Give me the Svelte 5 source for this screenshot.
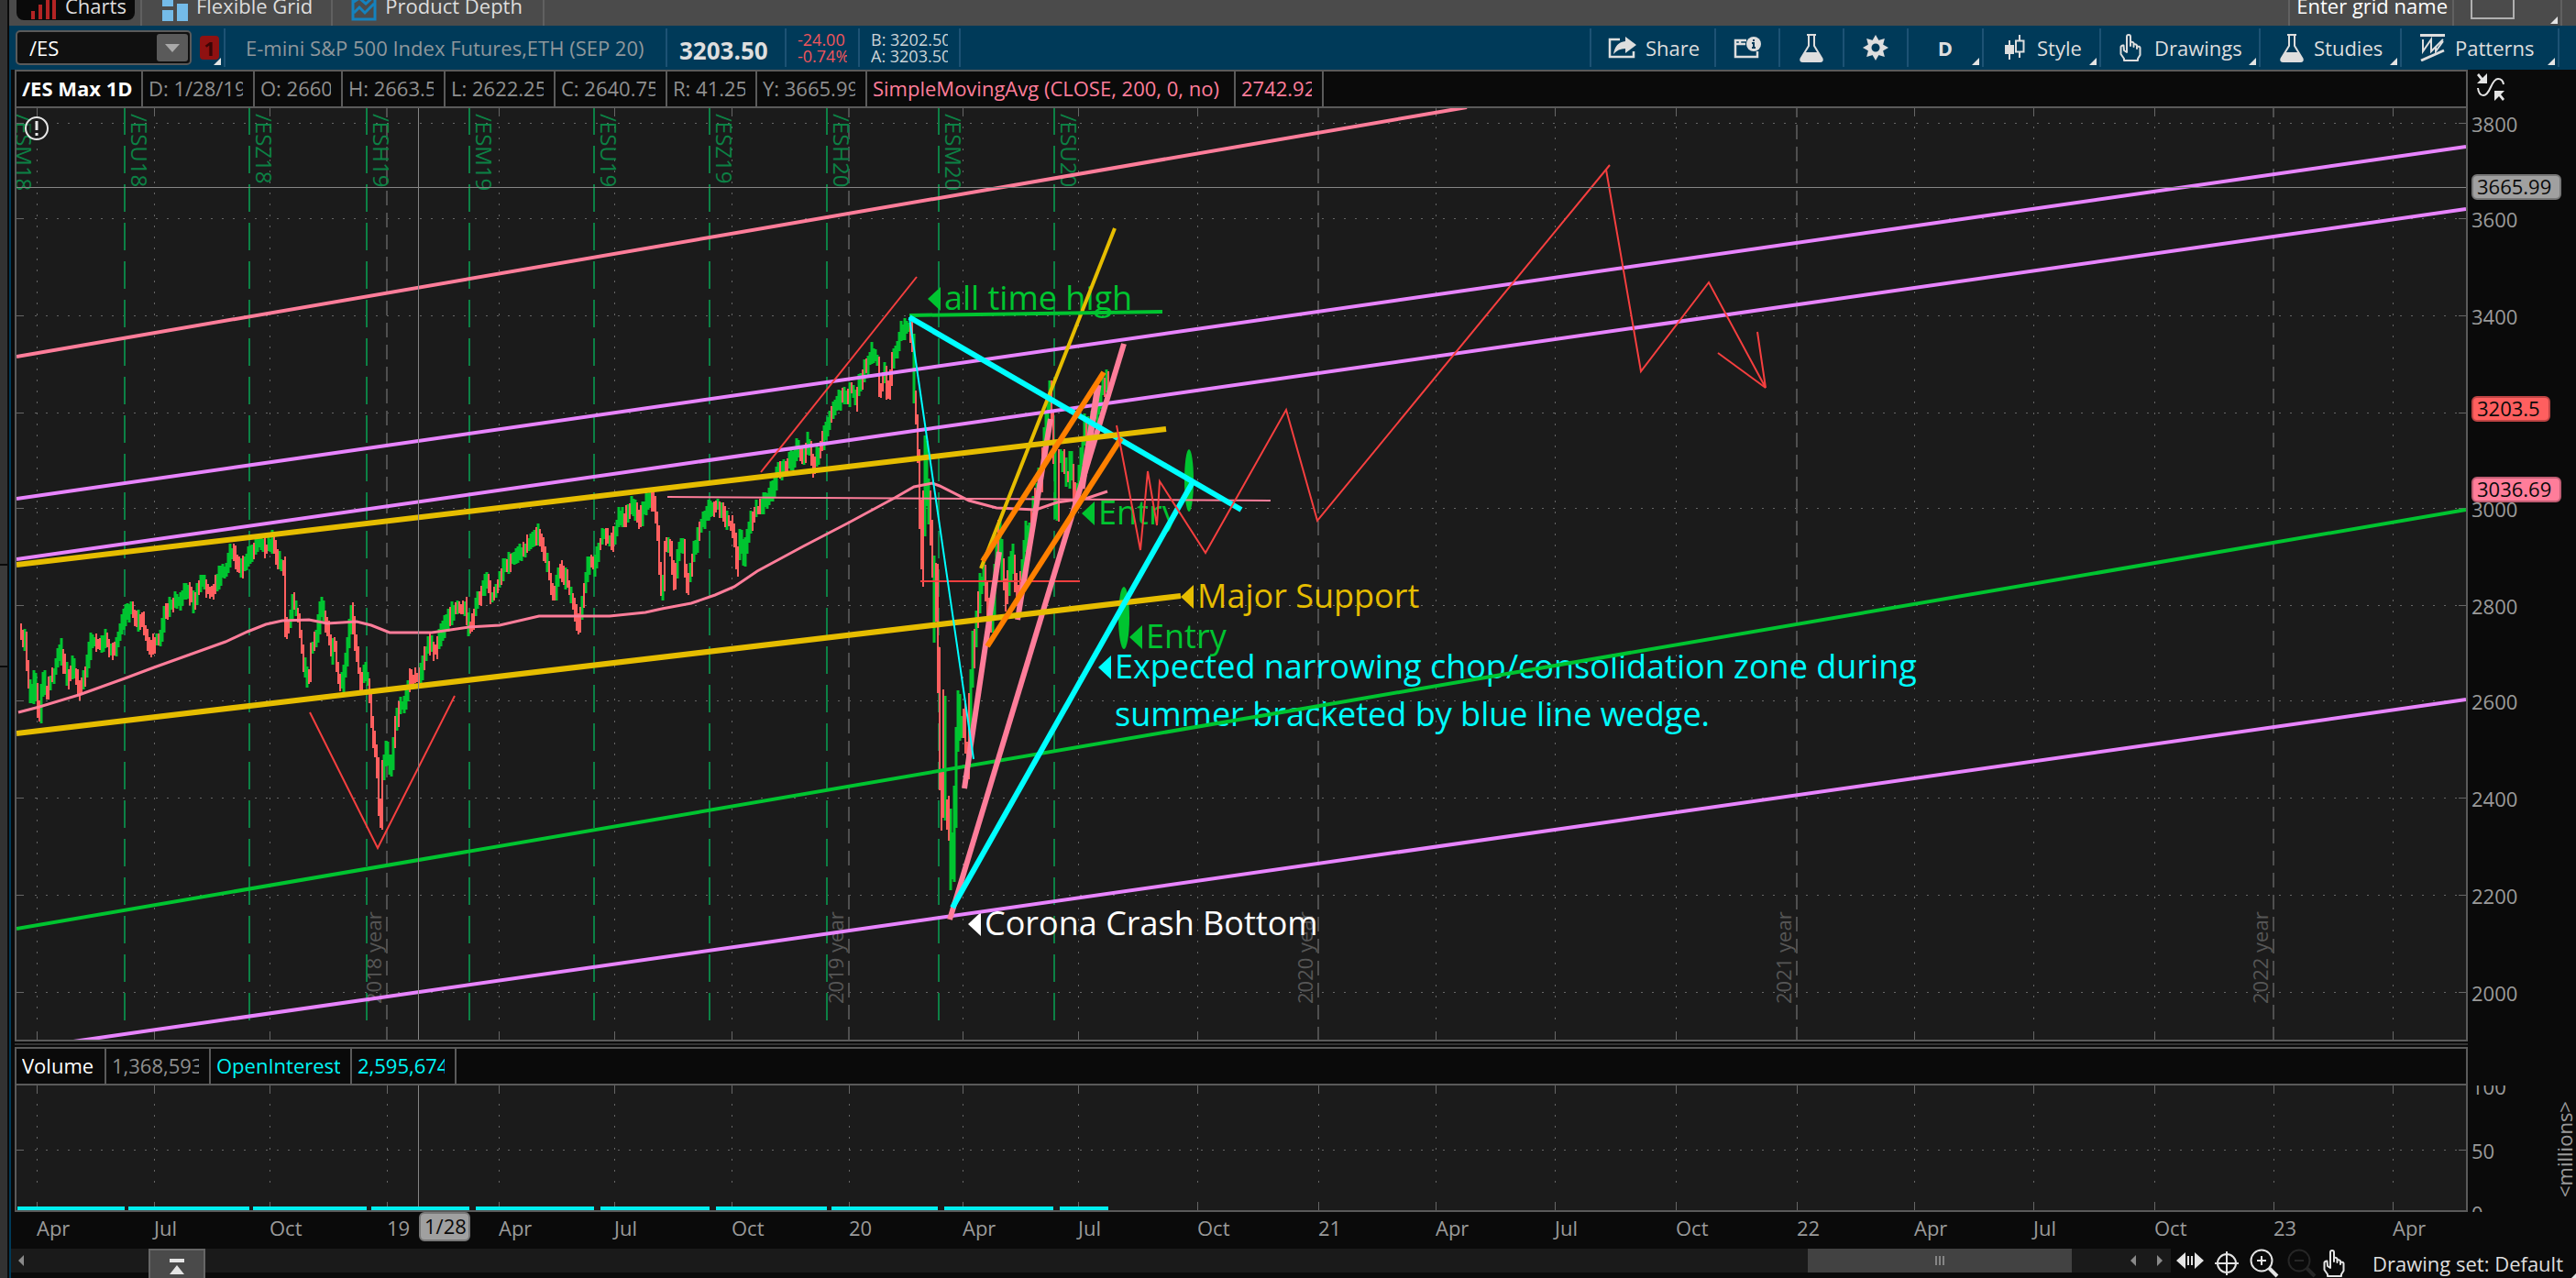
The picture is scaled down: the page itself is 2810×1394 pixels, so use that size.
<script>
  const readings = [
    { text: '/ES Max 1D', w: 138, kind: 'title' },
    { text: 'D: 1/28/19', w: 122 },
    { text: 'O: 2660.50', w: 96 },
    { text: 'H: 2663.50', w: 112 },
    { text: 'L: 2622.25', w: 120 },
    { text: 'C: 2640.75', w: 122 },
    { text: 'R: 41.25', w: 98 },
    { text: 'Y: 3665.99', w: 120 },
    { text: 'SimpleMovingAvg (CLOSE, 200, 0, no)', w: 402, kind: 'pink' },
    { text: '2742.92', w: 96, kind: 'pink' }
  ];
  const volumeReadings = [
    { text: 'Volume', w: 98, kind: 'white' },
    { text: '1,368,593', w: 114 },
    { text: 'OpenInterest', w: 154, kind: 'cyan' },
    { text: '2,595,674', w: 114, kind: 'cyan' }
  ];

  const months = [
    [40, 'Apr'], [168, 'Jul'], [294, 'Oct'], [422, '19'], [544, 'Apr'], [670, 'Jul'], [798, 'Oct'],
    [926, '20'], [1050, 'Apr'], [1176, 'Jul'], [1306, 'Oct'], [1438, '21'], [1566, 'Apr'], [1696, 'Jul'],
    [1828, 'Oct'], [1960, '22'], [2088, 'Apr'], [2218, 'Jul'], [2350, 'Oct'], [2480, '23'], [2610, 'Apr']
  ];
  const years = [[422, '2018 year'], [926, '2019 year'], [1438, '2020 year'], [1960, '2021 year'], [2480, '2022 year']];
  const isYear = (x) => years.some((y) => y[0] === x);
  const prices = [
    [134, 3800], [238, 3600], [344, 3400], [450, 3200], [554, 3000],
    [660, 2800], [764, 2600], [870, 2400], [976, 2200], [1082, 2000]
  ];
  const tags = [
    { y: 190, w: 98, text: '3665.99', kind: 'grey' },
    { y: 432, w: 86, text: '3203.5', kind: 'red' },
    { y: 520, w: 98, text: '3036.69', kind: 'rose' }
  ];
  const expiries = [
    [10, '/ESM18'], [136, '/ESU18'], [272, '/ESZ18'], [400, '/ESH19'], [512, '/ESM19'],
    [648, '/ESU19'], [774, '/ESZ19'], [902, '/ESH20'], [1024, '/ESM20'], [1150, '/ESU20']
  ];

  const path = [
    23,690,27,700,30,740,34,765,37,737,41,773,43,777,46,737,50,760,55,740,59,732,65,707,73,740,79,727,87,753,93,730,
    100,697,107,705,114,695,122,713,129,693,137,668,143,665,150,677,155,677,162,707,168,700,174,700,179,668,189,655,
    196,658,202,640,211,657,220,630,230,650,239,628,246,623,252,600,262,622,271,608,282,590,289,600,297,590,303,613,
    309,618,311,687,316,680,319,653,325,673,330,717,336,747,339,707,345,697,350,657,357,687,361,713,364,693,368,737,
    373,747,379,700,383,667,388,707,393,747,397,730,402,747,405,790,411,837,413,880,415,895,417,840,421,817,426,840,
    430,797,436,770,440,770,446,740,452,740,457,740,464,710,470,700,474,713,482,687,495,663,507,663,512,687,520,657,
    530,633,536,653,545,633,549,618,556,612,567,605,576,593,586,580,595,610,604,653,610,620,619,637,626,663,631,687,
    635,657,642,610,647,617,658,580,667,593,676,560,681,567,689,547,697,567,706,546,713,550,717,583,720,640,722,653,
    725,597,731,597,735,637,740,600,745,597,749,643,756,603,765,570,774,552,783,552,794,570,800,577,803,617,807,587,
    811,610,817,573,822,558,829,555,842,535,847,517,856,508,865,500,869,490,874,502,881,483,887,510,895,487,900,466,
    907,454,913,440,920,428,925,435,928,421,933,438,937,418,943,404,952,383,957,394,959,428,965,407,968,435,973,394,
    978,380,983,361,992,357,995,373,997,431,1000,473,1003,555,1005,610,1007,555,1009,493,1012,555,1015,583,1017,624,
    1018,686,1021,642,1023,728,1025,847,1027,880,1029,763,1030,847,1032,933,1034,847,1036,930,1038,960,1040,913,
    1043,797,1046,770,1048,823,1050,767,1052,813,1055,825,1058,753,1062,707,1064,686,1068,645,1073,624,1077,666,
    1082,679,1085,631,1089,573,1093,624,1097,655,1100,631,1104,600,1110,660,1114,630,1118,580,1123,576,1128,538,
    1135,521,1140,459,1145,428,1148,473,1150,521,1152,580,1155,500,1160,497,1164,528,1167,500,1171,535,1175,548,
    1178,504,1183,466,1188,473,1193,452,1198,442,1203,418,1207,418,1210,442
  ];

  function makeBars(points) {
    let seed = 17;
    const rand = () => {
      seed = (seed * 1103515245 + 12345) % 2147483648;
      return seed / 2147483648;
    };
    let up = '';
    let down = '';
    let seg = 0;
    let last = points[1];
    let recent = [last, last, last];
    for (let x = points[0]; x <= points[points.length - 2]; x += 2) {
      while (seg < points.length - 4 && points[seg + 2] < x) seg += 2;
      const x0 = points[seg], y0 = points[seg + 1], x1 = points[seg + 2], y1 = points[seg + 3];
      const y = y0 + ((y1 - y0) * (x - x0)) / (x1 - x0);
      const swing = x > 1000 && x < 1062 ? 28 : x >= 1062 ? 14 : 9;
      const top = Math.round(Math.min(y, last) - 3 - rand() * swing);
      const bottom = Math.round(Math.max(y, last) + 3 + rand() * swing);
      const climbing = y < recent[0];
      const rising = rand() < 0.22 ? !climbing : climbing;
      const bar = `M${x} ${top}V${bottom}`;
      if (rising) up += bar;
      else down += bar;
      last = y;
      recent = [...recent.slice(1), y];
    }
    return { up, down };
  }
  const bars = makeBars(path);

  const average =
    '20,777 43,771 86,758 136,740 168,728 207,714 246,700 270,689 290,681 308,677 337,676 357,680 389,678 405,682 425,690 471,690 511,684 545,682 588,672 665,672 704,668 722,664 754,658 780,649 801,640 826,623 876,596 926,570 976,543 997,531 1017,527 1025,530 1057,546 1087,554 1130,556 1153,548 1187,543 1208,536';

  const trends = [
    [18, 389, 1600, 117, 'rose', 4],
    [18, 544, 2690, 160, 'violet', 4],
    [18, 610, 2690, 228, 'violet', 4],
    [80, 1136, 2690, 763, 'violet', 4],
    [18, 1013, 2690, 556, 'green', 4],
    [728, 542, 1386, 546, 'rose', 2],
    [1004, 634, 1178, 634, 'red', 2],
    [1070, 620, 1216, 249, 'gold', 4],
    [992, 344, 1268, 340, 'green', 4],
    [1036, 1003, 1226, 375, 'rose', 6],
    [1052, 860, 1090, 602, 'rose', 6],
    [1110, 676, 1146, 457, 'rose', 6],
    [1180, 533, 1198, 420, 'rose', 7],
    [992, 346, 1354, 556, 'cyan', 6],
    [18, 616, 1272, 468, 'gold', 6],
    [18, 800, 1288, 650, 'gold', 6],
    [1072, 612, 1204, 406, 'orange', 6],
    [1077, 705, 1223, 478, 'orange', 6],
    [1039, 990, 1301, 526, 'cyan', 6],
    [992, 346, 1062, 828, 'cyan', 2]
  ];
  const sketches = [
    '338,777 412,925 496,759',
    '830,515 1000,302',
    '1218,464 1244,600 1252,514 1262,573 1265,525 1315,603 1403,447 1437,568 1756,180',
    '1752,185 1790,405 1864,308 1926,423 1917,362',
    '1874,385 1926,423'
  ];
  const notes = [
    { x: 1012, y: 326, kind: 'green', lines: ['all time high'] },
    { x: 1180, y: 560, kind: 'green', lines: ['Entry'] },
    { x: 1288, y: 651, kind: 'gold', lines: ['Major Support'] },
    { x: 1232, y: 695, kind: 'green', lines: ['Entry'] },
    { x: 1198, y: 728, kind: 'cyan', lines: ['Expected narrowing chop/consolidation zone during', 'summer bracketed by blue line wedge.'] },
    { x: 1056, y: 1008, kind: 'white', lines: ['Corona Crash Bottom'] }
  ];
  const interest = [
    [19, 136], [140, 272], [276, 400], [405, 512], [519, 648],
    [655, 774], [781, 902], [907, 1023], [1030, 1149], [1156, 1209]
  ];
  let symbol = $state('/ES');
</script>

{#snippet flask()}
  <svg class="ico" viewBox="0 0 26 32" width="26" height="32">
    <path d="M8 2h10M10 3v11L1.500 28q-1 3 2 3h19q3 0 2-3L16 14V3" fill="none" stroke="currentColor" stroke-width="2" />
    <path d="M6 21h14l5 8q0 2-2 2H3q-2 0-2-2z" fill="currentColor" />
  </svg>
{/snippet}

{#snippet hand()}
  <svg class="ico" viewBox="0 0 24 30" width="24" height="30">
    <path d="M5 29v-2L1.500 22V14q1-2 3-1.500L5 18l3 2V3q0-2 2-2t2 2v10V9q2.500-1 3.500 1v4-2.500q2.500-1 3.500 1V16v-2q3-1 3.500 1v8L20 27v2z" fill="none" stroke="currentColor" stroke-width="2" stroke-linejoin="round" />
  </svg>
{/snippet}

{#snippet readout(items)}
  {#each items as item}
    <div class="cell {item.kind ?? ''}" style="width: {item.w}px"><span>{item.text}</span></div>
  {/each}
{/snippet}

<div class="app">
  <aside class="dock"><button class="dock-handle" aria-label="Open sidebar"></button></aside>
  <main>
    <nav class="tabs">
      <button class="tab active">
        <svg viewBox="0 0 28 30" width="28" height="30"><path d="M0 21h4v9H0zM8 14h4v16H8zM16 7h4v23h-4zM23 0h4v30h-4z" fill="#b32424" /></svg>
        Charts
      </button>
      <button class="tab grid-tab">
        <svg viewBox="0 0 28 34" width="28" height="34"><path d="M0 0h12v18H0zM0 22h12v12H0zM16 0h12v10H16zM16 15h12v19H16z" fill="#74bbe8" /></svg>
        Flexible Grid
      </button>
      <button class="tab depth-tab">
        <svg viewBox="0 0 28 34" width="28" height="34"><path d="M2 0v32h24V0M3 13l6-4 7 6 9-8M3 25l6-6 6 6 10-10" fill="none" stroke="#1482be" stroke-width="3" /></svg>
        Product Depth
      </button>
      <span class="spacer"></span>
      <label class="grid-name" for="grid-layout">Enter grid name</label>
      <button class="grid-pick" id="grid-layout" aria-label="Grid layout"><i class="box"></i><i class="corner"></i></button>
    </nav>

    <header class="toolbar">
      <div class="symbol">
        <input bind:value={symbol} aria-label="Symbol" />
        <button aria-label="Symbol list"><svg viewBox="0 0 16 9" width="16" height="9"><path d="M0 0h16L8 9z" fill="#aaa" /></svg></button>
      </div>
      <button class="link"><b>1</b><i class="corner"></i></button>
      <div class="desc">E-mini S&amp;P 500 Index Futures,ETH (SEP 20)</div>
      <div class="last">3203.50</div>
      <div class="pair change"><span>-24.00</span><span>-0.74%</span></div>
      <div class="pair quote"><span>B: 3202.50</span><span>A: 3203.50</span></div>
      <span class="spacer"></span>
      <button class="tool share">
        <svg class="ico" viewBox="0 0 31 24" width="31" height="24">
          <path d="M13 3H2v19h26v-6" fill="none" stroke="currentColor" stroke-width="2.500" />
          <path d="M19 0l12 9-12 9v-5q-8 0-13 6 2-13 13-14z" fill="currentColor" />
        </svg>
        Share
      </button>
      <button class="tool icon" aria-label="Info">
        <svg class="ico" viewBox="0 0 30 24" width="30" height="24">
          <path d="M14 4H2v18h24v-6M2 8h11M7 8V5" fill="none" stroke="currentColor" stroke-width="2.500" />
          <circle cx="22" cy="8" r="8" fill="currentColor" />
          <path d="M22 3v2M20 7h2v5M20 12h4" stroke="#003a59" stroke-width="2" fill="none" />
        </svg>
      </button>
      <button class="tool icon" aria-label="Lab">{@render flask()}</button>
      <button class="tool icon" aria-label="Settings">
        <svg class="ico" viewBox="-14 -14 28 28" width="28" height="28">
          {#each [0, 45, 90, 135, 180, 225, 270, 315] as a}
            <path d="M-4 -7L0 -14L4 -7z" fill="currentColor" transform="rotate({a})" />
          {/each}
          <circle r="6.500" fill="none" stroke="currentColor" stroke-width="4" />
        </svg>
      </button>
      <button class="tool period"><b>D</b><i class="corner"></i></button>
      <button class="tool style">
        <svg class="ico" viewBox="0 0 22 28" width="22" height="28">
          <path d="M5 6v21" stroke="currentColor" stroke-width="2" /><path d="M0 11h10v10H0z" fill="currentColor" />
          <path d="M16 0v6M16 19v6M12 6.500h8.500v12H12z" fill="none" stroke="currentColor" stroke-width="2" />
        </svg>
        Style<i class="corner"></i>
      </button>
      <button class="tool drawings">{@render hand()}Drawings<i class="corner"></i></button>
      <button class="tool studies">{@render flask()}Studies<i class="corner"></i></button>
      <button class="tool patterns">
        <svg class="ico" viewBox="0 0 28 30" width="28" height="30">
          <path d="M0 1.500h27M1 29l25-11" stroke="currentColor" stroke-width="3" />
          <path d="M3 6v13L12 6v13L25 6M17 14v5L25 8" fill="none" stroke="currentColor" stroke-width="2" />
        </svg>
        Patterns<i class="corner"></i>
      </button>
    </header>

    <section class="work">
      <div class="head-row">
        <div class="head">{@render readout(readings)}</div>
        <button class="fit" aria-label="Auto scale">
          <svg viewBox="0 0 30 30" width="30" height="30">
            <path d="M11 0v11H0l4-4-4-5 2-2 4 5zM19 19h11l-4 4 4 5-2 2-4-5-5 5z" fill="#e4e4e4" />
            <path d="M1 16q1 8 6 8 4 0 8-9t8-9q5 0 6 6" fill="none" stroke="#e4e4e4" stroke-width="2" />
          </svg>
        </button>
      </div>

      <svg class="chart" viewBox="16 118 2794 1016" role="img" aria-label="Price chart">
        <defs><clipPath id="plot"><rect x="18" y="118" width="2672" height="1016" /></clipPath></defs>
        <rect x="18" y="118" width="2672" height="1016" fill="#1b1b1b" />
        <g clip-path="url(#plot)">
          <g class="grid">
            {#each prices as [y]}
              <path d="M18 {y}.500H26M2682 {y}.500H2690" />
              <path d="M38 {y}.500H2680" stroke-dasharray="2 10" />
            {/each}
            {#each months as [x]}
              <path d="M{x}.500 118V127M{x}.500 1125V1134" />
              {#if !isYear(x)}<path d="M{x}.500 138V1122" stroke-dasharray="2 10" />{/if}
            {/each}
          </g>
          {#each years as [x, label]}
            <path d="M{x} 112V1134" stroke="#4f4f4f" stroke-width="2" stroke-dasharray="16 8" />
            <text class="year" transform="translate({x - 6} 1095) rotate(-90)">{label}</text>
          {/each}
          {#each expiries as [x, label]}
            <path d="M{x} 117V1122" stroke="#0c8145" stroke-width="2" stroke-dasharray="30 12" />
            <text class="expiry" transform="translate({x + 7} 124) rotate(90)">{label}</text>
          {/each}
          <path d={bars.up} stroke="#00c430" stroke-width="3" />
          <path d={bars.down} stroke="#ff5f5f" stroke-width="2" />
          <polyline points={average} fill="none" stroke="#ff7d9a" stroke-width="3" />
          <ellipse class="fill-green" cx="1297" cy="524" rx="5" ry="34" />
          <ellipse class="fill-green" cx="1226" cy="674" rx="6" ry="34" />
          {#each notes as note}
            <path class="fill-{note.kind}" d="M{note.x} {note.y}l14-13v26z" />
            {#each note.lines as line, i}
              <text class="note fill-{note.kind}" x={note.x + 18} y={note.y + 12 + i * 52}>{line}</text>
            {/each}
          {/each}
          {#each trends as [x1, y1, x2, y2, kind, width]}
            <line class="line-{kind}" {x1} {y1} {x2} {y2} stroke-width={width} />
          {/each}
          {#each sketches as points}
            <polyline class="line-red" {points} fill="none" stroke-width="2" />
          {/each}
          <path d="M18 204.500H2690M456.500 118V1134" stroke="#858585" />
        </g>
        <path d="M17 118V1134M2691 118V1134" stroke="#5a5a5a" stroke-width="2" />
        <circle cx="40" cy="140" r="12" fill="#1b1b1b" fill-opacity="0.500" stroke="#e6e6e6" stroke-width="2" />
        <path d="M40 132v10M40 145v3" stroke="#e6e6e6" stroke-width="3" />
        {#each prices as [y, value]}
          {#if value !== 3200}<text class="axis" x="2696" y={y + 10}>{value}</text>{/if}
        {/each}
        {#each tags as tag}
          <rect class="tag-{tag.kind}" x="2697" y={tag.y + 1} width={tag.w - 2} height="26" rx="5" />
          <text class="tag-text" x="2702" y={tag.y + 22}>{tag.text}</text>
        {/each}
      </svg>

      <div class="splitter"></div>

      <div class="head-row"><div class="head">{@render readout(volumeReadings)}</div></div>

      <svg class="chart" viewBox="16 1184 2794 138" role="img" aria-label="Volume chart">
        <rect x="18" y="1184" width="2672" height="136" fill="#1b1b1b" />
        <g class="grid">
          <path d="M18 1254.500H26M2682 1254.500H2690" />
          <path d="M38 1254.500H2680" stroke-dasharray="2 10" />
          {#each months as [x]}
            <path d="M{x}.500 1184V1193M{x}.500 1311V1320" />
            <path d="M{x}.500 1204V1292" stroke-dasharray="2 10" />
          {/each}
        </g>
        <path d="M456.500 1184V1320" stroke="#858585" />
        {#each interest as [from, to]}
          <path d="M{from} 1318H{to}" stroke="#00f0f0" stroke-width="4" />
        {/each}
        <path d="M16 1321H2692M17 1184V1322M2691 1184V1322" stroke="#5a5a5a" stroke-width="2" />
        <text class="axis" x="2696" y="1194">100</text>
        <text class="axis" x="2696" y="1264">50</text>
        <text class="axis" x="2696" y="1332">0</text>
        <text class="axis" transform="translate(2806 1306) rotate(-90)">&lt;millions&gt;</text>
      </svg>

      <svg class="chart" viewBox="16 1322 2794 40" role="img" aria-label="Time axis">
        {#each months as [x, label]}<text class="axis" x={x} y="1348">{label}</text>{/each}
        <rect class="tag-grey" x="458" y="1323" width="54" height="30" rx="5" />
        <text class="tag-text" x="463" y="1346">1/28</text>
      </svg>
    </section>

    <footer>
      <div class="track">
        <button class="arrow" aria-label="Scroll to start"><svg viewBox="0 0 6 12" width="6" height="12"><path d="M6 0v12L0 6z" fill="#8a8a8a" /></svg></button>
        <button class="expand" aria-label="Show panel"><svg viewBox="0 0 16 18" width="16" height="18"><path d="M0 0h16v4H0zM8 7l8 10H0z" fill="#e4e4e4" /></svg></button>
        <span class="spacer"></span>
        <div class="thumb"><i></i><i></i><i></i></div>
        <div class="steps">
          <button class="arrow" aria-label="Scroll left"><svg viewBox="0 0 6 12" width="6" height="12"><path d="M6 0v12L0 6z" fill="#8a8a8a" /></svg></button>
          <button class="arrow" aria-label="Scroll right"><svg viewBox="0 0 6 12" width="6" height="12"><path d="M0 0v12l6-6z" fill="#8a8a8a" /></svg></button>
        </div>
      </div>
      <div class="controls">
        <button aria-label="Stretch"><svg viewBox="0 0 30 18" width="30" height="18"><path d="M10 0v18L0 9zM20 0v18l10-9z" fill="currentColor" /><path class="bars" d="M13 4v10M17 4v10" /></svg></button>
        <button aria-label="Crosshair"><svg viewBox="0 0 26 26" width="26" height="26"><circle cx="13" cy="13" r="10" /><path d="M13 0v26M0 13h26" /></svg></button>
        <button aria-label="Zoom in"><svg viewBox="0 0 32 32" width="32" height="32"><circle cx="13" cy="13" r="11.500" /><path d="M8 13h10M13 8v10" /><path d="M21 21l9 9" stroke-width="4" /></svg></button>
        <button aria-label="Zoom out" disabled><svg viewBox="0 0 32 32" width="32" height="32"><circle cx="13" cy="13" r="11.500" /><path d="M8 13h10" /><path d="M21 21l9 9" stroke-width="4" /></svg></button>
        <button aria-label="Pointer">{@render hand()}</button>
      </div>
      <button class="set">Drawing set: Default</button>
    </footer>
  </main>
</div>

<style>
  :global(body) { margin: 0; background: #0a0a0a; }
  .app { display: grid; grid-template-columns: 8px minmax(0, 1fr); background: #0a0a0a; color: #ddd; font: 22px/30px "Open Sans", "Noto Sans", sans-serif; }
  button, input { font: inherit; color: inherit; background: none; border: 0; padding: 0; margin: 0; border-radius: 0; }
  .dock { background: #323232; padding-top: 615px; }
  .dock-handle { display: block; box-sizing: border-box; width: 8px; height: 113px; border: solid #0a0a0a; border-width: 2px 0; background: #3b3b3b; }
  main { margin-left: 2px; border-left: 2px solid #003a59; }
  .spacer { flex: 1; }

  .tabs { display: flex; align-items: flex-end; height: 28px; overflow: hidden; background: #4b4b4b; margin-left: -2px; padding-left: 8px; box-sizing: border-box; }
  .tab { display: flex; align-items: center; gap: 9px; height: 44px; flex: none; box-sizing: border-box; border-right: 2px solid #606060; }
  .tab svg { flex: none; }
  .active { height: 38px; margin: 0 6px 6px 0; padding: 6px 9px 0 16px; background: #0a0a0a; border: 0; border-radius: 8px; }
  .grid-tab { border-left: 2px solid #606060; padding: 0 20px 0 22px; }
  .depth-tab { padding: 0 22px 0 20px; }
  .grid-name { display: flex; align-items: center; height: 44px; padding: 0 5px 0 7px; border: solid #606060; border-width: 0 2px; color: #fff; }
  .grid-pick { position: relative; display: flex; align-items: flex-end; height: 44px; width: 118px; box-sizing: border-box; margin-right: 15px; padding: 0 0 7px 18px; border-right: 2px solid #606060; }
  .box { width: 44px; height: 40px; border: 2px solid #b0b0b0; }
  .corner { position: absolute; right: 3px; bottom: 2px; width: 8px; height: 8px; background: #e4e4e4; clip-path: polygon(100% 0, 100% 100%, 0 100%); }

  .toolbar { display: flex; align-items: center; height: 48px; box-sizing: border-box; padding: 4px 18px 4px 5px; background: #003a59; }
  .symbol { display: flex; align-items: center; width: 192px; height: 38px; box-sizing: border-box; border: 2px solid #5a5a5a; border-radius: 5px; background: #101010; padding: 0 2px 0 13px; }
  .symbol input { flex: 1; min-width: 0; color: #fff; outline: 0; }
  .symbol button { width: 34px; height: 30px; background: #5a5a5a; border-radius: 3px; display: flex; align-items: center; justify-content: center; }
  .link { position: relative; width: 37px; height: 42px; box-sizing: border-box; padding: 0 7px 0 9px; border-right: 2px solid #1d5274; }
  .link b { display: block; width: 21px; height: 26px; line-height: 26px; border-radius: 4px; background: #8f1111; color: #3a0505; }
  .desc, .last, .pair { display: flex; align-items: center; height: 42px; box-sizing: border-box; border-right: 2px solid #1d5274; white-space: nowrap; flex: none; }
  .desc { width: 482px; padding-left: 22px; color: #8f979c; }
  .last { width: 130px; padding: 6px 0 0 13px; font-size: 26px; font-weight: 700; color: #dedede; }
  .pair { flex-direction: column; align-items: flex-start; justify-content: center; font-size: 18px; line-height: 18px; padding: 0 12px; }
  .pair span { width: 100%; overflow: hidden; height: 18px; }
  .change { width: 80px; color: #f2555c; }
  .quote { width: 110px; color: #ccd4d8; }
  .tool { position: relative; display: flex; align-items: center; gap: 10px; height: 42px; box-sizing: border-box; flex: none; border-right: 2px solid #1d5274; color: #dedede; }
  .ico { flex: none; display: block; }
  .share { width: 138px; padding-left: 18px; border-left: 2px solid #1d5274; }
  .icon { width: 70px; justify-content: center; }
  .period { width: 82px; justify-content: center; }
  .style { width: 128px; padding-left: 23px; gap: 13px; }
  .drawings { width: 174px; padding-left: 20px; gap: 14px; }
  .studies { width: 154px; padding-left: 21px; gap: 11px; }
  .patterns { width: 172px; padding-left: 20px; }

  .work { margin-left: 4px; }
  .head-row { display: flex; }
  .head { flex: 1; display: flex; height: 38px; border: 2px solid #5a5a5a; min-width: 0; }
  .head-row:not(:has(.fit)) { padding-right: 118px; }
  .cell { box-sizing: border-box; flex: none; padding: 3px 11px 0 6px; border-right: 2px solid #5a5a5a; color: #8f8f8f; white-space: nowrap; }
  .cell span { display: block; overflow: hidden; }
  .title { color: #fff; font-weight: 700; padding-right: 0; }
  .white { color: #fff; }
  .pink { color: #ff7d9a; }
  .cyan { color: #00f5f5; }
  .fit { width: 118px; padding: 0 0 4px 10px; display: flex; align-items: center; }
  .chart { display: block; width: 100%; height: auto; }
  .splitter { height: 8px; margin-right: 118px; box-sizing: border-box; border-top: 2px solid #5a5a5a; background: linear-gradient(#0a0a0a 2px, #333 2px, #333 4px, #0a0a0a 4px); }

  .grid path { fill: none; stroke: #666; stroke-width: 1; shape-rendering: crispEdges; }
  .axis { font-size: 22px; fill: #9a9a9a; }
  .year { font-size: 22px; fill: #565656; }
  .expiry { font-size: 24px; fill: #0c8145; }
  .note { font-size: 36px; }
  .tag-text { font-size: 22px; fill: #0a0a0a; }
  .tag-grey { fill: #a0a0a0; stroke: #777; stroke-width: 2; }
  .tag-red { fill: #ff5f5f; stroke: #c04444; stroke-width: 2; }
  .tag-rose { fill: #ff7d9a; stroke: #c05c72; stroke-width: 2; }
  .fill-green { fill: #00c430; }
  .fill-gold { fill: #e6bd00; }
  .fill-cyan { fill: #00ffff; }
  .fill-white { fill: #fff; }
  .line-rose { stroke: #ff7d9a; }
  .line-violet { stroke: #e884ff; }
  .line-green { stroke: #00c430; }
  .line-gold { stroke: #e6bd00; }
  .line-orange { stroke: #ff8000; }
  .line-cyan { stroke: #00ffff; }
  .line-red { stroke: #f53f3f; }

  footer { display: flex; height: 32px; overflow: hidden; }
  .track { flex: 1; display: flex; height: 26px; background: #1a1a1a; }
  .arrow { display: flex; align-items: center; }
  .track > .arrow { width: 150px; padding-left: 8px; box-sizing: border-box; }
  .expand { height: 32px; width: 62px; box-sizing: border-box; padding-top: 6px; border: 2px solid #666; border-bottom: 0; background: #4a4a4a; display: flex; align-items: center; justify-content: center; }
  .thumb { width: 288px; background: #424242; display: flex; align-items: center; justify-content: center; gap: 2px; }
  .thumb i { width: 2px; height: 10px; background: #858585; }
  .steps { width: 108px; display: flex; justify-content: flex-end; gap: 23px; padding-right: 9px; box-sizing: border-box; }
  .controls { display: flex; gap: 12px; padding: 0 30px 0 6px; color: #e4e4e4; }
  .controls button { display: flex; align-items: center; height: 32px; }
  .controls button:first-child { height: 26px; }
  .controls svg { fill: none; stroke: currentColor; stroke-width: 2; }
  .controls button:first-child svg { stroke: none; }
  .controls .bars { stroke: currentColor; }
  .controls button:disabled { color: #262626; margin-right: -5px; margin-left: -3px; }
  .set { padding-right: 14px; height: 32px; line-height: 26px; color: #dedede; position: relative; white-space: nowrap; }
  .set::after { content: ""; position: absolute; right: 0; bottom: 0; width: 5px; height: 5px; background: #e4e4e4; clip-path: polygon(100% 0, 100% 100%, 0 100%); }
</style>
